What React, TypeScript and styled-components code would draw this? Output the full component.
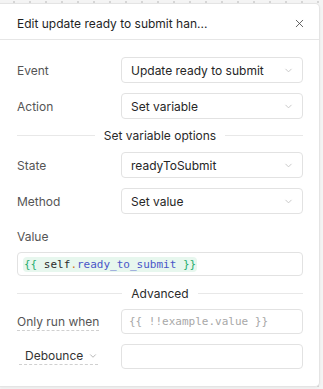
import styled, { createGlobalStyle } from "styled-components";
import { ChevronDown, X } from "lucide-react";

const GlobalStyle = createGlobalStyle`
  html, body {
    margin: 0;
    padding: 0;
  }
  body {
    background-color: #f4f4f4;
    background-image: radial-gradient(#d6d6d6 1px, transparent 1.2px);
    background-size: 16px 16px;
    background-position: 6px -6px;
    font-family: Inter, "Noto Sans", sans-serif;
  }
`;

export default function App() {
  return (
    <>
      <GlobalStyle />
      <Page>
        <Panel>
          <Header>
            <Title>Edit update ready to submit han...</Title>
            <CloseButton>
              <X size={13} strokeWidth={1.5} />
            </CloseButton>
          </Header>
          <Body>
            <Row>
              <Label>Event</Label>
              <Select>
                <span>Update ready to submit</span>
                <ChevronDown size={11} color="#c4c4c4" />
              </Select>
            </Row>
            <Row>
              <Label>Action</Label>
              <Select>
                <span>Set variable</span>
                <ChevronDown size={11} color="#c4c4c4" />
              </Select>
            </Row>
            <Section>
              <span>Set variable options</span>
            </Section>
            <Row>
              <Label>State</Label>
              <Select>
                <span>readyToSubmit</span>
                <ChevronDown size={11} color="#c4c4c4" />
              </Select>
            </Row>
            <Row>
              <Label>Method</Label>
              <Select>
                <span>Set value</span>
                <ChevronDown size={11} color="#c4c4c4" />
              </Select>
            </Row>
            <StackLabel>Value</StackLabel>
            <CodeBox>
              <CodeChip>
                <Brace>{"{{"}</Brace> self<Dot>.</Dot>
                <Prop>ready_to_submit</Prop> <Brace>{"}}"}</Brace>
              </CodeChip>
            </CodeBox>
            <Section $advanced>
              <span>Advanced</span>
            </Section>
            <Row>
              <Label>
                <Dashed>Only run when</Dashed>
              </Label>
              <Input>
                <Placeholder>{"{{ !!example.value }}"}</Placeholder>
              </Input>
            </Row>
            <Row>
              <Label>
                <DebounceButton>
                  Debounce
                  <ChevronDown size={10} color="#aaa" />
                </DebounceButton>
              </Label>
              <Input />
            </Row>
          </Body>
        </Panel>
      </Page>
    </>
  );
}

const Page = styled.div`
  padding: 3px 3px 2px 0;
`;

const Panel = styled.div`
  width: 320px;
  height: 384px;
  box-sizing: border-box;
  background: #ffffff;
  border: 1px solid #e4e4e4;
  border-left: none;
  border-radius: 0 5px 5px 0;
  box-shadow: 0 1px 3px rgba(0, 0, 0, 0.05);
  display: flex;
  flex-direction: column;
`;

const Header = styled.div`
  height: 32px;
  padding: 3px 13px 0 17px;
  flex-shrink: 0;
  display: flex;
  align-items: center;
  justify-content: space-between;
  border-bottom: 1px solid #e6e6e6;
`;

const Title = styled.div`
  font-size: 12px;
  color: #1f1f1f;
  font-weight: 400;
`;

const CloseButton = styled.div`
  display: flex;
  color: #444;
`;

const Body = styled.div`
  padding: 17px 16px 0 17px;
  display: flex;
  flex-direction: column;
`;

const Row = styled.div`
  display: flex;
  align-items: center;
  margin-bottom: 10px;
`;

const Label = styled.div`
  width: 104px;
  flex-shrink: 0;
  font-size: 12px;
  color: #555;
`;

const Select = styled.div`
  flex: 1;
  height: 26px;
  box-sizing: border-box;
  border: 1px solid #e2e2e2;
  border-radius: 4px;
  display: flex;
  align-items: center;
  justify-content: space-between;
  padding: 0 8px 0 9px;
  font-size: 12px;
  color: #262626;
`;

const Input = styled.div`
  flex: 1;
  height: 25px;
  box-sizing: border-box;
  border: 1px solid #e2e2e2;
  border-radius: 4px;
  display: flex;
  align-items: center;
  padding: 0 7px;
`;

const Section = styled.div<{ $advanced?: boolean }>`
  display: flex;
  align-items: center;
  gap: 9px;
  height: 16px;
  margin: ${(p) => (p.$advanced ? "9px 0 8px" : "-2px 0 9px")};
  font-size: 12px;
  color: #2a2a2a;

  &::before,
  &::after {
    content: "";
    flex: 1;
    height: 1px;
    background: #e8e8e8;
  }
`;

const StackLabel = styled.div`
  font-size: 12px;
  line-height: 16px;
  color: #555;
  margin: 5px 0 7px;
`;

const CodeBox = styled.div`
  height: 24px;
  box-sizing: border-box;
  border: 1px solid #e2e2e2;
  border-radius: 4px;
  display: flex;
  align-items: center;
  padding: 0 5px;
`;

const CodeChip = styled.span`
  background: #e7f7ee;
  border-radius: 4px;
  padding: 1px 1px;
  font-family: "DejaVu Sans Mono", "Liberation Mono", monospace;
  font-size: 11px;
  color: #2b2b2b;
  white-space: pre;
`;

const Brace = styled.span`
  color: #27ae6e;
`;

const Dot = styled.span`
  color: #d07a2a;
`;

const Prop = styled.span`
  color: #4a55c8;
`;

const Placeholder = styled.span`
  font-family: "DejaVu Sans Mono", "Liberation Mono", monospace;
  font-size: 11px;
  color: #a8a8a8;
`;

const Dashed = styled.span`
  border-bottom: 1px dashed #d0d0d0;
  padding-bottom: 1px;
`;

const DebounceButton = styled.span`
  display: inline-flex;
  align-items: center;
  gap: 5px;
  margin-left: 2px;
  padding: 0 0 1px 6px;
  border-bottom: 1px dashed #d0d0d0;
  color: #333;
`;
